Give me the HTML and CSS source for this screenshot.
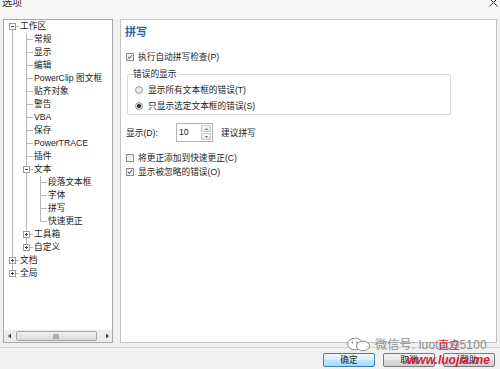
FILE: index.html
```html
<!DOCTYPE html>
<html lang="zh">
<head>
<meta charset="utf-8">
<title>选项</title>
<link rel="stylesheet" href="styles.css">
</head>
<body>
<div class="titlebar">
  <span class="title">选项</span>
  <svg class="close" viewBox="0 0 9 9"><path d="M0.5 0.5 L8.5 8.5 M8.5 0.5 L0.5 8.5" stroke="#333" stroke-width="1"/></svg>
</div>

<div class="main">
  <div class="tree-panel">
    <div class="tree">
      <div class="row"><span class="g first"><i class="box"></i></span><span class="txt">工作区</span></div>
      <div class="row"><span class="g v"></span><span class="g t"></span><span class="txt">常规</span></div>
      <div class="row"><span class="g v"></span><span class="g t"></span><span class="txt">显示</span></div>
      <div class="row"><span class="g v"></span><span class="g t"></span><span class="txt">编辑</span></div>
      <div class="row"><span class="g v"></span><span class="g t"></span><span class="txt">PowerClip 图文框</span></div>
      <div class="row"><span class="g v"></span><span class="g t"></span><span class="txt">贴齐对象</span></div>
      <div class="row"><span class="g v"></span><span class="g t"></span><span class="txt">警告</span></div>
      <div class="row"><span class="g v"></span><span class="g t"></span><span class="txt">VBA</span></div>
      <div class="row"><span class="g v"></span><span class="g t"></span><span class="txt">保存</span></div>
      <div class="row"><span class="g v"></span><span class="g t"></span><span class="txt">PowerTRACE</span></div>
      <div class="row"><span class="g v"></span><span class="g t"></span><span class="txt">插件</span></div>
      <div class="row"><span class="g v"></span><span class="g t open"><i class="box"></i></span><span class="txt">文本</span></div>
      <div class="row"><span class="g v"></span><span class="g v"></span><span class="g t"></span><span class="txt">段落文本框</span></div>
      <div class="row"><span class="g v"></span><span class="g v"></span><span class="g t"></span><span class="txt">字体</span></div>
      <div class="row"><span class="g v"></span><span class="g v"></span><span class="g t"></span><span class="txt">拼写</span></div>
      <div class="row"><span class="g v"></span><span class="g v"></span><span class="g l"></span><span class="txt">快速更正</span></div>
      <div class="row"><span class="g v"></span><span class="g t"><i class="box plus"></i></span><span class="txt">工具箱</span></div>
      <div class="row"><span class="g v"></span><span class="g l"><i class="box plus"></i></span><span class="txt">自定义</span></div>
      <div class="row"><span class="g t"><i class="box plus"></i></span><span class="txt">文档</span></div>
      <div class="row"><span class="g l"><i class="box plus"></i></span><span class="txt">全局</span></div>
    </div>
    <div class="hscroll">
      <span class="arrow"><svg viewBox="0 0 8 8"><path d="M5 1.5 L2 4 L5 6.5 Z" fill="#404040"/></svg></span>
      <span class="thumb"><svg viewBox="0 0 7 5" class="grip"><path d="M1 0v5M3 0v5M5 0v5" stroke="#7a7a7a" stroke-width="1"/></svg></span>
      <span class="arrow right"><svg viewBox="0 0 8 8"><path d="M3 1.5 L6 4 L3 6.5 Z" fill="#404040"/></svg></span>
    </div>
  </div>

  <div class="opts">
    <h1 class="heading">拼写</h1>
    <div class="opt first-opt"><span class="cb checked"><svg viewBox="0 0 8 8"><path d="M1.5 4 L3.2 6 L6.5 1.5" fill="none" stroke="#2b2b2b" stroke-width="1.2"/></svg></span><span>执行自动拼写检查(P)</span></div>

    <fieldset class="group">
      <legend>错误的显示</legend>
      <div class="opt radio-row"><span class="rb"></span><span>显示所有文本框的错误(T)</span></div>
      <div class="opt radio-row"><span class="rb on"></span><span>只显示选定文本框的错误(S)</span></div>
    </fieldset>

    <div class="count-row">
      <span class="count-label">显示(D):</span>
      <span class="spin">
        <span class="spin-val">10</span>
        <span class="spin-btns">
          <span class="sb"><svg viewBox="0 0 6 4"><path d="M1 3 L3 1 L5 3 Z" fill="#555"/></svg></span>
          <span class="sb"><svg viewBox="0 0 6 4"><path d="M1 1 L3 3 L5 1 Z" fill="#555"/></svg></span>
        </span>
      </span>
      <span class="count-after">建议拼写</span>
    </div>

    <div class="opt gap-opt"><span class="cb"></span><span>将更正添加到快速更正(C)</span></div>
    <div class="opt second-cb"><span class="cb checked"><svg viewBox="0 0 8 8"><path d="M1.5 4 L3.2 6 L6.5 1.5" fill="none" stroke="#2b2b2b" stroke-width="1.2"/></svg></span><span>显示被忽略的错误(O)</span></div>
  </div>
</div>

<div class="footer">
  <button class="btn default">确定</button>
  <button class="btn">取消</button>
  <button class="btn">帮助</button>
</div>

<div class="wm-line">
  <svg class="wechat" viewBox="0 0 26 15"><ellipse cx="9" cy="7" rx="7.5" ry="5.8" fill="#fff" stroke="#8c8c8c" stroke-width="1"/><ellipse cx="17" cy="9" rx="6.5" ry="4.8" fill="#fff" stroke="#8c8c8c" stroke-width="1"/><circle cx="6.5" cy="5.5" r="0.9" fill="#8c8c8c"/><circle cx="11" cy="5.5" r="0.9" fill="#8c8c8c"/></svg>
  <span class="wm-text">微信号: luotuo95100</span>
</div>
<span class="wm-red-top">直立</span>
<span class="wm-red">www.luojia.me</span>
</body>
</html>
```

FILE: styles.css
```css
* { box-sizing: border-box; }
html, body { margin: 0; padding: 0; }
body {
  width: 500px;
  height: 369px;
  overflow: hidden;
  position: relative;
  background: #f0f0f0;
  font-family: "Liberation Sans", "Noto Sans CJK SC", sans-serif;
  font-size: 8.7px;
  color: #1c1c1c;
}

/* title bar */
.titlebar {
  height: 19px;
  display: flex;
  justify-content: space-between;
  align-items: flex-start;
  background: #f6f6f6;
}
.title {
  font-size: 10px;
  line-height: 10px;
  margin: -2px 0 0 2px;
  color: #2a2a2a;
}
.close {
  width: 9px;
  height: 9px;
  margin: -2px 2px 0 0;
}

/* main */
.main {
  display: flex;
  gap: 7px;
  padding: 0 3px;
  height: 324px;
}

/* tree */
.tree-panel {
  width: 110px;
  flex: none;
  border: 1px solid #a8a8a8;
  background: #fff;
  display: flex;
  flex-direction: column;
}
.tree { flex: 1; padding-left: 1px; }
.row { display: flex; height: 13px; }
.txt { margin-left: 1px; line-height: 13px; white-space: nowrap; color: #1a1a1a; }
.g {
  flex: none;
  width: 14px;
  height: 13px;
  display: flex;
  align-items: center;
  background-repeat: no-repeat;
}
.g.v {
  background-image: linear-gradient(#b8b8b8, #b8b8b8);
  background-position: 7px 0;
  background-size: 1px 13px;
}
.g.t {
  background-image: linear-gradient(#b8b8b8, #b8b8b8), linear-gradient(#b8b8b8, #b8b8b8);
  background-position: 7px 0, 7px 6px;
  background-size: 1px 13px, 7px 1px;
}
.g.l {
  background-image: linear-gradient(#b8b8b8, #b8b8b8), linear-gradient(#b8b8b8, #b8b8b8);
  background-position: 7px 0, 7px 6px;
  background-size: 1px 7px, 7px 1px;
}
.g.first {
  background-image: linear-gradient(#b8b8b8, #b8b8b8), linear-gradient(#b8b8b8, #b8b8b8);
  background-position: 7px 6px, 7px 6px;
  background-size: 1px 7px, 7px 1px;
}
.box {
  width: 7px;
  height: 7px;
  margin-left: 4px;
  border: 1px solid #9a9a9a;
  background-color: #fff;
  background-image: linear-gradient(#404040, #404040);
  background-repeat: no-repeat;
  background-position: 1px 2px;
  background-size: 3px 1px;
}
.box.plus {
  background-image: linear-gradient(#404040, #404040), linear-gradient(#404040, #404040);
  background-position: 1px 2px, 2px 1px;
  background-size: 3px 1px, 1px 3px;
}

/* horizontal scrollbar */
.hscroll {
  height: 12px;
  flex: none;
  display: flex;
  align-items: center;
  background: #ececec;
  padding: 0 1px;
  gap: 2px;
}
.arrow { width: 9px; height: 10px; display: flex; align-items: center; justify-content: center; }
.arrow svg { width: 8px; height: 8px; }
.thumb {
  width: 81px;
  height: 10px;
  border: 1px solid #a2a2a2;
  border-radius: 2px;
  background: linear-gradient(#f1f1f1, #dadada);
  display: flex;
  align-items: center;
  justify-content: center;
}
.grip { width: 7px; height: 5px; }
.arrow.right { margin-left: auto; }

/* options panel */
.opts {
  flex: 1;
  border: 1px solid #c2c2c2;
  background: #fff;
  padding: 6px 4px 0 4px;
}
.heading {
  margin: 0;
  font-size: 11px;
  line-height: 12px;
  font-weight: bold;
  color: #2c64a8;
}
.opt {
  display: flex;
  align-items: center;
  height: 12px;
  line-height: 12px;
  gap: 4px;
  white-space: nowrap;
}
.first-opt { margin-top: 13px; margin-left: 1px; }
.cb {
  width: 8px;
  height: 8px;
  flex: none;
  border: 1px solid #8f8f8f;
  background: linear-gradient(135deg, #e6e6e6, #fafafa);
  display: flex;
}
.cb svg { width: 6px; height: 6px; }

.group {
  margin: 5px 0 0 2px;
  width: 324px;
  border: 1px solid #dadada;
  border-radius: 2px;
  padding: 4px 5px 2px 5px;
}
.group legend {
  padding: 0 2px 0 0;
  line-height: 12px;
  color: #1c1c1c;
}
.radio-row { margin-left: 2px; gap: 5px; }
.radio-row + .radio-row { margin-top: 4px; }
.rb {
  width: 8px;
  height: 8px;
  flex: none;
  border-radius: 50%;
  border: 1px solid #9a9a9a;
  background: radial-gradient(circle, #f2f2f2 0, #dedede 100%);
}
.rb.on {
  background: radial-gradient(circle, #2a3a4a 0, #2a3a4a 1.6px, #e4e4e4 2.4px);
}

.count-row {
  display: flex;
  align-items: center;
  margin-top: 8px;
  margin-left: 1px;
  height: 19px;
}
.count-label { width: 50px; }
.spin {
  width: 37px;
  height: 19px;
  border: 1px solid #b2b4ba;
  background: #fff;
  display: flex;
}
.spin-val { flex: 1; padding-left: 2px; line-height: 17px; }
.spin-btns {
  width: 12px;
  display: flex;
  flex-direction: column;
  gap: 1px;
  padding: 1px;
}
.sb {
  flex: 1;
  border: 1px solid #cdcdcd;
  background: linear-gradient(#f6f6f6, #e3e3e3);
  display: flex;
  align-items: center;
  justify-content: center;
}
.sb svg { width: 5px; height: 4px; }
.count-after { margin-left: 8px; }

.gap-opt { margin-top: 10px; margin-left: 1px; }
.second-cb { margin-top: 2px; margin-left: 1px; }

/* footer */
.footer {
  margin-top: 4px;
  border-top: 1px solid #d6d6d6;
  padding: 5px 5px 0 0;
  display: flex;
  justify-content: flex-end;
  gap: 8px;
}
.btn {
  width: 52px;
  height: 14px;
  padding: 0;
  font: inherit;
  line-height: 12px;
  color: #1c1c1c;
  border: 1px solid #7a7a7a;
  border-radius: 2px;
  background: linear-gradient(#f3f3f3 0%, #ebebeb 50%, #dddddd 51%, #d0d0d0 100%);
}
.btn.default {
  border-color: #3c7fb1;
  background: linear-gradient(#eaf6fd 0%, #d9f0fc 50%, #bee6fd 51%, #a7d9f5 100%);
}

/* watermark overlay */
.wm-line {
  position: absolute;
  left: 346px;
  top: 337px;
  display: flex;
  align-items: center;
  gap: 3px;
}
.wechat { width: 26px; height: 15px; }
.wm-text {
  font-size: 12px;
  line-height: 14px;
  color: #8e8e8e;
  letter-spacing: 0.2px;
}
.wm-red-top {
  position: absolute;
  left: 438px;
  top: 339px;
  font-size: 11px;
  line-height: 13px;
  color: #d52b3c;
}
.wm-red {
  position: absolute;
  left: 407px;
  top: 353px;
  font-size: 12px;
  line-height: 14px;
  font-weight: bold;
  font-style: italic;
  color: #d4203a;
}
```
